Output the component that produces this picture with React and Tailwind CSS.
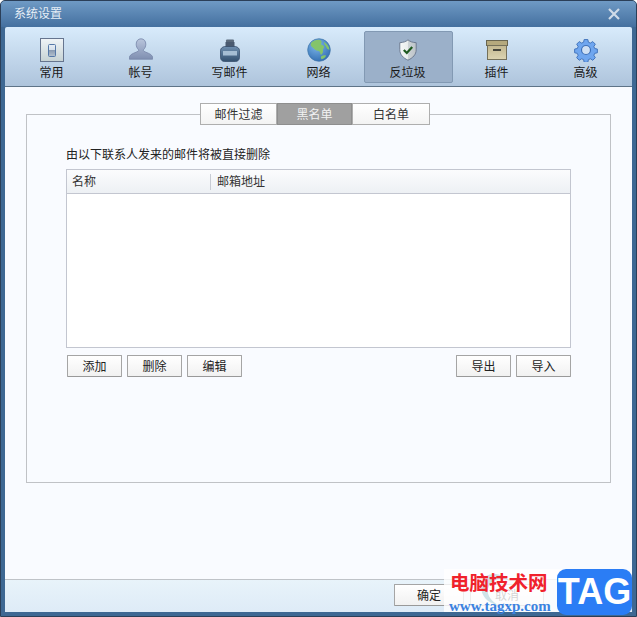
import React from "react";

function IconGeneral() {
  return (
    <svg width="24" height="24" viewBox="0 0 24 24">
      <defs><linearGradient id="g1" x1="0" y1="0" x2="0" y2="1"><stop offset="0" stopColor="#f0f4f7" /><stop offset="1" stopColor="#c6d2d4" /></linearGradient>
      <linearGradient id="g1b" x1="0" y1="0" x2="0" y2="1"><stop offset="0" stopColor="#e8eef5" /><stop offset="0.45" stopColor="#d5dfea" /><stop offset="0.5" stopColor="#8b9cb2" /><stop offset="1" stopColor="#b5c2cf" /></linearGradient></defs>
      <rect x="0.5" y="0.5" width="23" height="23" fill="url(#g1)" stroke="#66758f" />
      <rect x="8.5" y="6.5" width="7" height="12" rx="1" fill="url(#g1b)" stroke="#5578a8" />
    </svg>
  );
}
function IconUser() {
  return (
    <svg width="24" height="24" viewBox="0 0 24 24">
      <defs><linearGradient id="g2" x1="0" y1="0" x2="0" y2="1"><stop offset="0" stopColor="#b9c5dc" /><stop offset="1" stopColor="#7f8fb1" /></linearGradient></defs>
      <path d="M12 .8c3 0 4.800 2.300 4.800 5.400 0 2.200-.9 4.200-2.200 5.300-.4.400-.3 1.300.2 1.700 2.300 1.500 7.500 2.400 8.600 5.200.2.700.2 2.300.2 2.800H.4c0-.5 0-2.100.2-2.800 1.100-2.800 6.300-3.700 8.600-5.200.5-.4.600-1.300.2-1.700C8.100 10.400 7.200 8.400 7.200 6.200 7.200 3.100 9 .8 12 .8z" fill="url(#g2)" stroke="#7685a8" strokeWidth="0.8" />
    </svg>
  );
}
function IconInk() {
  return (
    <svg width="20" height="23" viewBox="0 0 20 23">
      <defs><linearGradient id="g3" x1="0" y1="0" x2="0" y2="1"><stop offset="0" stopColor="#6f8fb0" /><stop offset="1" stopColor="#33506f" /></linearGradient></defs>
      <rect x="6" y="0.5" width="8" height="3" rx="1" fill="#5b6a7c" />
      <rect x="5.500" y="3" width="9" height="5" fill="#4a5a70" />
      <path d="M4.500 7.500h11c2.300.5 4 2 4 4v7c0 2.300-1.700 4-4 4h-11c-2.300 0-4-1.700-4-4v-7c0-2 1.700-3.500 4-4z" fill="url(#g3)" stroke="#2f4664" strokeWidth="0.7" />
      <rect x="3" y="12" width="14" height="4.500" fill="#a5bdd3" />
    </svg>
  );
}
function IconGlobe() {
  return (
    <svg width="24" height="24" viewBox="0 0 24 24">
      <defs><radialGradient id="g4" cx="0.4" cy="0.3" r="0.8"><stop offset="0" stopColor="#7fb8ea" /><stop offset="1" stopColor="#2c68ae" /></radialGradient></defs>
      <circle cx="12" cy="12" r="11.300" fill="url(#g4)" stroke="#3d74a8" strokeWidth="0.7" />
      <path d="M4 5c3-3 8-4 10-2.500 1 1 .5 2.500 0 3.500s2.500 1 3 2.500-1.500 2-1 4c.4 1.500-.5 3-2 4.500-1-1-.5-3-2-4-1.500-.5-3.500-.2-5-2.200S3 8.500 4 5z" fill="#84c46a" />
      <path d="M17 4c2.500 1.500 5 4 5.500 7.500-1.200.2-2.500-.5-3-2S16.500 6 17 4z" fill="#84c46a" />
      <path d="M14 18.500c1.500-1 3.500-1.500 5-1 -.5 2-2.500 3.500-4.500 3.800-.5-1 -.8-2-.5-2.800z" fill="#84c46a" />
    </svg>
  );
}
function IconShield() {
  return (
    <svg width="18" height="22" viewBox="0 0 18 22">
      <defs><linearGradient id="g5" x1="0" y1="0" x2="1" y2="0"><stop offset="0" stopColor="#f6f8f8" /><stop offset="0.5" stopColor="#e8ecec" /><stop offset="0.5" stopColor="#cdd3d6" /><stop offset="1" stopColor="#bcc3c8" /></linearGradient></defs>
      <path d="M9 .8c1.800 1.700 4.500 2.700 8.200 2.900v7c0 4.800-3.400 8.300-8.200 10.500C4.200 19 .8 15.500.8 10.700v-7C4.500 3.500 7.200 2.500 9 .8z" fill="url(#g5)" stroke="#66748a" strokeWidth="0.9" />
      <path d="M4.800 11l3 3 5.400-6" fill="none" stroke="#1f5a20" strokeWidth="2.200" />
    </svg>
  );
}
function IconBox() {
  return (
    <svg width="22" height="20" viewBox="0 0 22 20">
      <defs><linearGradient id="g6" x1="0" y1="0" x2="0" y2="1"><stop offset="0" stopColor="#c2b78f" /><stop offset="1" stopColor="#dcd4b2" /></linearGradient></defs>
      <rect x="0.500" y="0.500" width="21" height="5" fill="#b5a97d" stroke="#6a6650" />
      <rect x="1.500" y="5.500" width="19" height="14" fill="url(#g6)" stroke="#74705a" />
      <rect x="7" y="9" width="8" height="2" fill="#45453c" />
    </svg>
  );
}
function IconGear() {
  return (
    <svg width="24" height="24" viewBox="0 0 24 24">
      <path d="M10 .7h4l.6 2.900 2.200.9 2.500-1.600 2.800 2.800-1.600 2.500.9 2.200 2.900.6v4l-2.900.6-.9 2.200 1.600 2.500-2.800 2.800-2.500-1.600-2.200.9-.6 2.900h-4l-.6-2.900-2.200-.9-2.500 1.600-2.800-2.800 1.600-2.500-.9-2.200-2.900-.6v-4l2.900-.6.9-2.200-1.600-2.500 2.800-2.800 2.500 1.600 2.200-.9z" transform="translate(.9 .9) scale(.925)" fill="#6fa6ef" stroke="#3e70b8" strokeWidth="1" />
      <circle cx="12" cy="12" r="4.500" fill="#cfe0f4" stroke="#3e70b8" strokeWidth="1.200" />
    </svg>
  );
}

const tools = [
  { label: "常用", Icon: IconGeneral },
  { label: "帐号", Icon: IconUser },
  { label: "写邮件", Icon: IconInk },
  { label: "网络", Icon: IconGlobe },
  { label: "反垃圾", Icon: IconShield, active: true },
  { label: "插件", Icon: IconBox },
  { label: "高级", Icon: IconGear },
];

function ToolItem({ label, Icon, active }) {
  return (
    <div
      className={`w-[89px] h-[52px] flex flex-col items-center pr-[2px] rounded-[2px] border ${
        active ? "bg-[#9bb0c9] border-[#8299b3]" : "border-transparent"
      }`}
    >
      <div className="h-[26px] mt-[5px] flex items-center justify-center"><Icon /></div>
      <div className="mt-[3px] text-[12px] leading-[14px] text-[#1a1a1a]">{label}</div>
    </div>
  );
}

function Tab({ children, w, active }) {
  return (
    <div
      className={`${w} h-[22px] flex items-center justify-center pt-[1px] text-[12px] border ${
        active
          ? "bg-[#a0a0a0] text-[#f2f2f2] border-[#8e8e8e]"
          : "bg-gradient-to-b from-white to-[#f3f3f3] text-[#333] border-[#aeaeae]"
      }`}
    >
      {children}
    </div>
  );
}

function Btn({ children, w = "w-[55px]" }) {
  return (
    <button className={`${w} h-[22px] flex items-center justify-center pt-[1px] text-[12px] text-[#222] rounded-[1px] border border-[#a5a5a5] border-b-[#999] bg-gradient-to-b from-white to-[#f1f1f1]`}>
      {children}
    </button>
  );
}

export default function App() {
  return (
    <div
      className="relative w-[637px] h-[617px] overflow-hidden bg-white"
      style={{ fontFamily: '"Liberation Sans","Noto Sans CJK SC",sans-serif' }}
    >
      <div className="w-[637px] h-[617px] flex flex-col rounded-t-[5px] border border-[#2b3f58] bg-[#3e6893]">
        {/* title bar */}
        <div className="h-[26px] shrink-0 flex items-center justify-between pl-[13px] pr-[16px] rounded-t-[4px] bg-gradient-to-b from-[#6f9ac5] to-[#44709f]">
          <span className="text-[12px] text-[#e6eef6]">系统设置</span>
          <svg width="12" height="12" viewBox="0 0 12 12">
            <path d="M1 1l10 10M11 1L1 11" stroke="#cfdbe8" strokeWidth="2.200" />
          </svg>
        </div>

        {/* client */}
        <div className="flex-1 min-h-0 flex flex-col ml-[4px] mr-[4px] mb-[4px] rounded-t-[2px] overflow-hidden">
          {/* toolbar */}
          <div className="h-[60px] shrink-0 flex items-start pt-[4px] pl-[3px] bg-gradient-to-b from-[#d8ebfb] to-[#aec4dc] border-b border-[#5f7488]">
            {tools.map((t) => (
              <ToolItem key={t.label} {...t} />
            ))}
          </div>

          {/* body */}
          <div className="flex-1 min-h-0 bg-[#f9fbff] pt-[16px] pl-[21px]">
            <div className="relative z-10 flex pl-[174px] mb-[-11px]">
              <Tab w="w-[77px]">邮件过滤</Tab>
              <Tab w="w-[75px]" active>黑名单</Tab>
              <Tab w="w-[78px]">白名单</Tab>
            </div>
            <div className="w-[585px] h-[369px] border border-[#c0c2c6] pt-[32px] pl-[39px]">
              <div className="text-[12px] leading-[16px] text-[#222]">由以下联系人发来的邮件将被直接删除</div>
              <div className="mt-[6px] w-[505px] h-[179px] border border-[#c3c6d0] bg-white flex flex-col">
                <div className="h-[24px] shrink-0 flex items-center border-b border-[#c3c6d0] bg-gradient-to-b from-[#fbfcfd] to-[#edf0f4] text-[12px] text-[#333]">
                  <div className="w-[144px] pl-[5px] h-[16px] leading-[16px] border-r border-[#c8ccd4]">名称</div>
                  <div className="pl-[6px]">邮箱地址</div>
                </div>
              </div>
              <div className="mt-[7px] w-[505px] pl-[1px] flex justify-between">
                <div className="flex gap-[5px]">
                  <Btn>添加</Btn>
                  <Btn>删除</Btn>
                  <Btn>编辑</Btn>
                </div>
                <div className="flex gap-[5px]">
                  <Btn>导出</Btn>
                  <Btn>导入</Btn>
                </div>
              </div>
            </div>
          </div>

          {/* footer */}
          <div className="h-[33px] shrink-0 border-t border-[#bfc3c8] bg-gradient-to-b from-[#e8f3fa] to-[#deebf7] flex justify-end pt-[4px] pr-[88px] gap-[6px]">
            <Btn w="w-[70px]">确定</Btn>
            <Btn w="w-[74px]">取消</Btn>
          </div>
        </div>
      </div>

      {/* watermark overlay */}
      <div className="absolute left-[444px] top-[569px] w-[122px] h-[43px] bg-white/80 pl-[6px] pt-[1px]">
        <svg className="absolute left-[34px] top-[3px]" width="34" height="36" viewBox="0 0 34 36">
          <path d="M8 4C-1 14 3 30 20 33 10 27 6 18 14 10c5-4 12-4 18-1C25 2 15 0 8 4z" fill="#cfe3e8" />
        </svg>
        <div className="relative text-[19.500px] leading-[24px] font-bold text-[#f0222c] whitespace-nowrap" style={{ fontFamily: '"Noto Sans CJK SC",sans-serif' }}>电脑技术网</div>
        <div className="relative text-[15px] leading-[16px] font-bold text-[#3b82e0] whitespace-nowrap mt-[4px] ml-[-1px]" style={{ fontFamily: '"Liberation Serif",serif' }}>www.tagxp.com</div>
      </div>
      <div className="absolute left-[557px] top-[569px] w-[75px] h-[46px] rounded-[9px] bg-[#2b7df5] flex items-center justify-center text-white text-[36px] font-bold" style={{ fontFamily: '"Liberation Sans",sans-serif' }}>
        TAG
      </div>
    </div>
  );
}
